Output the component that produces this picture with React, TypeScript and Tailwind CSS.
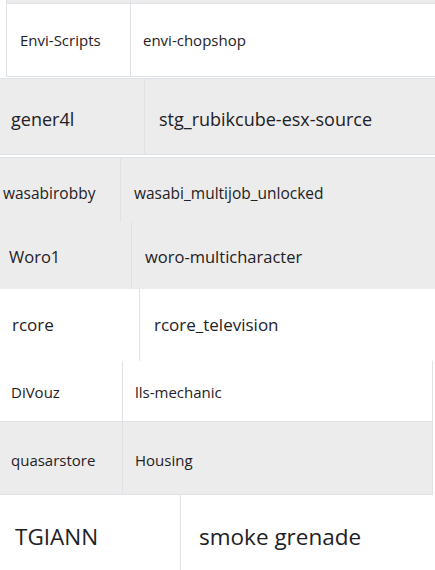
import React from "react";

function Cell({ children, className }: { children: React.ReactNode; className: string }) {
  return <div className={className}>{children}</div>;
}

export default function App() {
  const font = { fontFamily: '"Open Sans", "Noto Sans", sans-serif' };
  return (
    <div className="w-[435px] h-[570px] overflow-hidden bg-white text-[#1e2125]" style={font}>
      {/* Fragment A */}
      <div className="ml-[6px] w-[440px] border-l border-[#dee2e6]">
        <div className="flex h-[4px] bg-[#ececec] border-b border-[#dee2e6]">
          <div className="w-[124px] border-r border-[#dee2e6]" />
          <div className="flex-1" />
        </div>
        <div className="flex h-[73px] bg-white border-b border-[#dee2e6] items-stretch">
          <Cell className="w-[124px] border-r border-[#dee2e6] flex items-center pl-[13px] pt-[1px] text-[15px]">Envi-Scripts</Cell>
          <Cell className="flex-1 flex items-center pl-[12px] pt-[1px] text-[15px]">envi-chopshop</Cell>
        </div>
      </div>
      {/* Fragment B */}
      <div className="mt-[1px] w-[440px] border-t border-b border-[#dee2e6] bg-[#ececec] flex h-[77px]">
        <Cell className="w-[145px] border-r border-[#dee2e6] flex items-center pl-[11px] pt-[6px] text-[18px]">gener4l</Cell>
        <Cell className="flex-1 flex items-center pl-[14px] pt-[6px] text-[18px]">stg_rubikcube-esx-source</Cell>
      </div>
      {/* Fragment C */}
      <div className="mt-[2px] w-[440px] border-t border-[#dee2e6] bg-[#ececec]">
        <div className="flex h-[64px]">
          <Cell className="w-[121px] border-r border-[#dee2e6] flex items-center pl-[3px] pt-[8px] text-[15.5px]">wasabirobby</Cell>
          <Cell className="flex-1 flex items-center pl-[13px] pt-[8px] text-[15.5px]">wasabi_multijob_unlocked</Cell>
        </div>
        <div className="flex h-[67px]">
          <Cell className="w-[132px] border-r border-[#dee2e6] flex items-center pl-[9px] pt-[3px] text-[16.5px]">Woro1</Cell>
          <Cell className="flex-1 flex items-center pl-[13px] pt-[3px] text-[16.5px]">woro-multicharacter</Cell>
        </div>
      </div>
      {/* Fragment D */}
      <div className="w-[440px] bg-white flex h-[72px]">
        <Cell className="w-[140px] border-r border-[#dee2e6] flex items-center pl-[12px] text-[17px]">rcore</Cell>
        <Cell className="flex-1 flex items-center pl-[14px] text-[17px]">rcore_television</Cell>
      </div>
      {/* Fragment E */}
      <div className="w-[433px] border-r border-[#dee2e6]">
        <div className="flex h-[61px] bg-white border-b border-[#dee2e6]">
          <Cell className="w-[123px] border-r border-[#dee2e6] flex items-center pl-[11px] pt-[2px] text-[15px]">DiVouz</Cell>
          <Cell className="flex-1 flex items-center pl-[12px] pt-[2px] text-[15px]">lls-mechanic</Cell>
        </div>
        <div className="flex h-[73px] bg-[#ececec] border-b border-[#dee2e6]">
          <Cell className="w-[123px] border-r border-[#dee2e6] flex items-center pl-[11px] pt-[4px] text-[15px]">quasarstore</Cell>
          <Cell className="flex-1 flex items-center pl-[12px] pt-[4px] text-[15px]">Housing</Cell>
        </div>
      </div>
      {/* Fragment F */}
      <div className="w-[440px] bg-white flex h-[80px]">
        <Cell className="w-[181px] border-r border-[#dee2e6] flex items-center pl-[15px] pt-[4px] text-[22.5px]">TGIANN</Cell>
        <Cell className="flex-1 flex items-center pl-[18px] pt-[4px] text-[22.5px]">smoke grenade</Cell>
      </div>
    </div>
  );
}
